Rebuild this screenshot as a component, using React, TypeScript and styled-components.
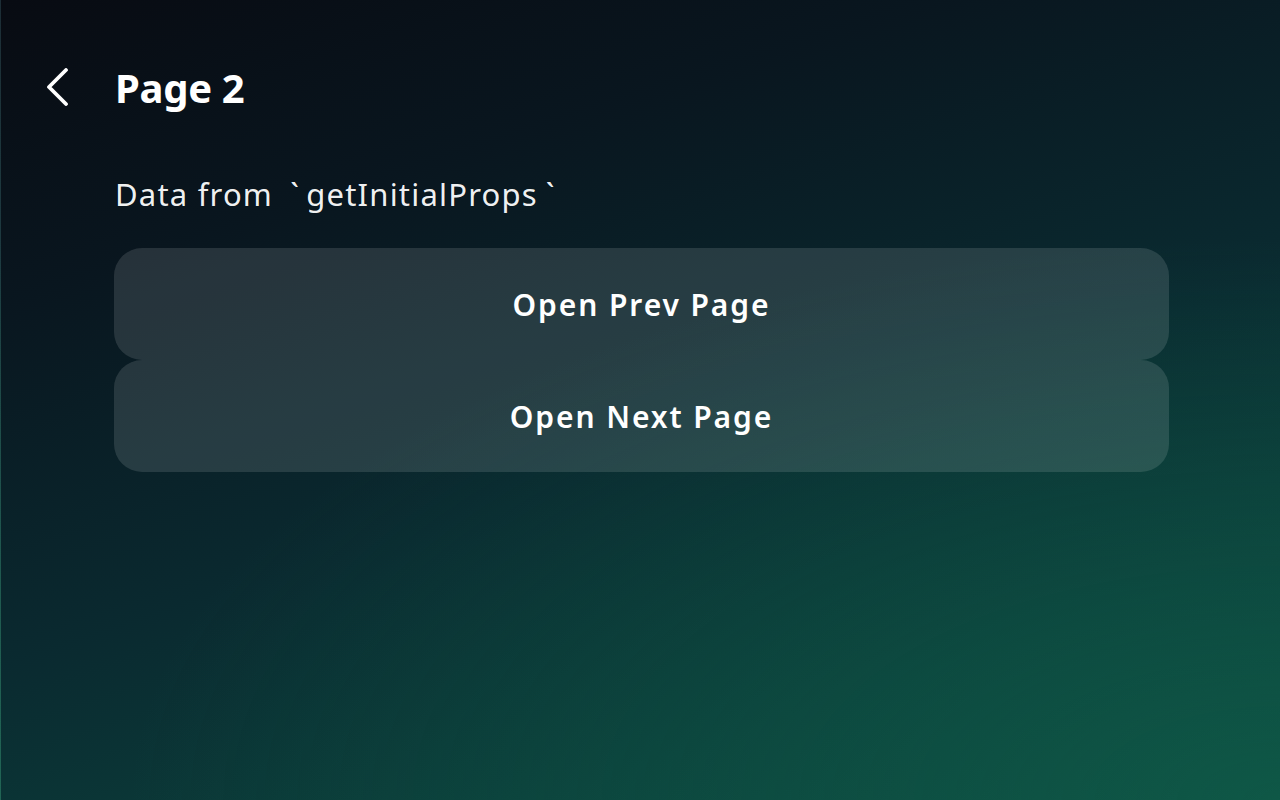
import styled, { createGlobalStyle } from "styled-components";

const GlobalStyle = createGlobalStyle`
    html, body {
        margin: 0;
        padding: 0;
        height: 100%;
    }
    body {
        font-family: "Noto Sans", "Open Sans", sans-serif;
        color: #fff;
    }
`;

const buttons = ["Open Prev Page", "Open Next Page"];

const ChevronLeft = () => (
    <svg width="36" height="38" viewBox="0 0 36 38" fill="none">
        <path d="M25 2 L8 19 L25 36" stroke="#fff" strokeWidth="3.8" strokeLinecap="round" strokeLinejoin="round" />
    </svg>
);

const App = () => {
    return <Screen>
        <GlobalStyle />
        <Header>
            <BackButton aria-label="Back"><ChevronLeft /></BackButton>
            <Title>Page 2</Title>
        </Header>
        <Content>
            <Caption>Data from <Tick>`</Tick>getInitialProps<Tick>`</Tick></Caption>
            <ButtonList>
                {buttons.map(b => <ActionButton key={b}>{b}</ActionButton>)}
            </ButtonList>
        </Content>
    </Screen>
}

export default App;

const Screen = styled.div`
    width: 1280px;
    height: 800px;
    box-sizing: border-box;
    overflow: hidden;
    border-left: 1px solid rgba(255, 255, 255, 0.08);
    background:
        radial-gradient(ellipse 90% 70% at 100% 100%, rgba(16, 96, 74, 0.55) 0%, rgba(16, 96, 74, 0) 100%),
        linear-gradient(162deg, #080b12 0%, #09161f 25%, #0a2a30 55%, #0b3f3b 80%, #0d4d42 100%);
`;

const Header = styled.div`
    display: flex;
    align-items: center;
    height: 174px;
    padding: 0 0 0 40px;
    box-sizing: border-box;
`;

const BackButton = styled.button`
    display: flex;
    align-items: center;
    justify-content: center;
    width: 36px;
    height: 38px;
    padding: 0;
    margin-right: 38px;
    border: none;
    background: none;
    cursor: pointer;
`;

const Title = styled.h1`
    margin: 0;
    font-size: 40px;
    font-weight: 700;
    letter-spacing: -0.3px;
    color: #fff;
`;

const Content = styled.div`
    padding: 0 111px 0 113px;
`;

const Caption = styled.div`
    font-size: 31px;
    font-weight: 400;
    letter-spacing: 1.2px;
    color: rgba(255, 255, 255, 0.96);
    line-height: 40px;
    margin-bottom: 34px;
    padding-left: 1px;
`;

const Tick = styled.span`
    display: inline-block;
    margin: 0 6px 0 8px;
`;

const ButtonList = styled.div`
    display: flex;
    flex-direction: column;
`;

const ActionButton = styled.button`
    height: 112px;
    width: 100%;
    border: none;
    border-radius: 28px;
    background: rgba(255, 255, 255, 0.12);
    color: #fff;
    font-family: "Noto Sans", "Open Sans", sans-serif;
    font-size: 30px;
    font-weight: 600;
    letter-spacing: 1.9px;
    cursor: pointer;
`;
